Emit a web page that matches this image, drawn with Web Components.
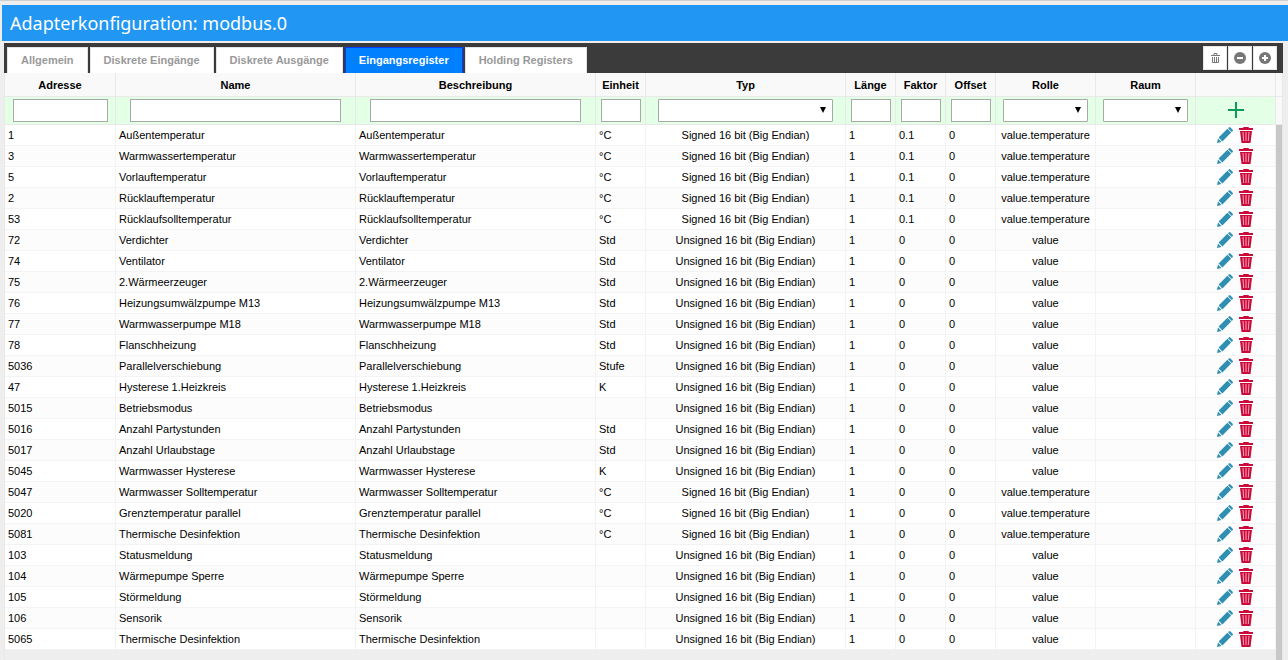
<!DOCTYPE html>
<html lang="de">
<head>
<meta charset="utf-8">
<title>Adapterkonfiguration: modbus.0</title>
<style>
html, body { margin: 0; height: 100%; }
body {
  display: flex; flex-direction: column;
  box-sizing: border-box;
  background: #eee; color: #000;
  border-top: 1px solid #d0d0d0;
  font: 11px/20px "Liberation Sans", Arial, sans-serif;
}
main { flex: 1; display: flex; flex-direction: column; min-height: 0; margin: 2px 5px 0 4px; }
</style>
</head>
<body>
<adapter-title>Adapterkonfiguration: modbus.0</adapter-title>
<main>
  <tab-bar>
    <tab-button>Allgemein</tab-button>
    <tab-button>Diskrete Eingänge</tab-button>
    <tab-button>Diskrete Ausgänge</tab-button>
    <tab-button active>Eingangsregister</tab-button>
    <tab-button>Holding Registers</tab-button>
    <tool-button slot="tools" icon="bin" label="Alle löschen"></tool-button>
    <tool-button slot="tools" icon="minus" label="Zuklappen"></tool-button>
    <tool-button slot="tools" icon="plus" label="Aufklappen"></tool-button>
  </tab-bar>
  <register-grid></register-grid>
</main>

<script>
const ICONS = {
  bin: `<svg width="12" height="12" viewBox="0 0 12 12" fill="none" stroke="#777">
    <path d="M2 3.500h9M5 3V1.500h3V3M3.500 5v5.500h6V5M5.500 5v5M7.500 5v5"/></svg>`,
  minus: `<svg width="12" height="12" viewBox="0 0 12 12"><circle cx="6" cy="6" r="6" fill="#777"/>
    <path d="M3 6h6" stroke="#fff" stroke-width="2"/></svg>`,
  plus: `<svg width="12" height="12" viewBox="0 0 12 12"><circle cx="6" cy="6" r="6" fill="#777"/>
    <path d="M3 6h6M6 3v6" stroke="#fff" stroke-width="2"/></svg>`,
  add: `<svg width="16" height="16" viewBox="0 0 16 16"><path d="M0 8h16M8 0v16" stroke="#0a9b5b" stroke-width="2"/></svg>`,
  edit: `<svg width="16" height="16" viewBox="0 0 16 16" fill="#2f8fb3">
    <path d="M0 16l1-4.500 3.500 3.500zM1.600 10.600L10.400 1.800l3.800 3.800-8.800 8.800zM11 1.200l.8-.7q.8-.8 1.600 0l2.100 2.100q.8.800 0 1.600L14.800 5z"/></svg>`,
  remove: `<svg width="14" height="16" viewBox="0 0 14 16">
    <path d="M4.500 2V.500h5V2" fill="none" stroke="#cc0a3a"/>
    <path d="M0 1h14v2H0zM1 4h12L11.500 16h-9z" fill="#cc0a3a"/>
    <path d="M4 5l.7 9M7 5v9M10 5l-.7 9" stroke="#f0a8bb"/></svg>`
};

class BaseElement extends HTMLElement {
  constructor() {
    super();
    this.attachShadow({mode: 'open'});
  }
  connectedCallback() {
    this.shadowRoot.innerHTML = this.render();
  }
}

class AdapterTitle extends BaseElement {
  render() {
    return `
<style>
:host { display: block; margin: 4px 0 0 2px; background: #2196f3; }
h1 { margin: 0; padding: 0 8px; color: #fff; font: 400 18px/36px "Noto Sans", "Open Sans", sans-serif; }
</style>
<h1><slot></slot></h1>`;
  }
}
customElements.define('adapter-title', AdapterTitle);

class TabBar extends BaseElement {
  render() {
    return `
<style>
:host { display: flex; justify-content: space-between; height: 30px; background: #3b3b3b; }
nav { display: flex; align-items: flex-end; gap: 2px; padding-left: 3px; }
.tools { display: flex; gap: 1px; padding: 3px 6px 0 0; }
</style>
<nav><slot></slot></nav>
<div class="tools"><slot name="tools"></slot></div>`;
  }
}
customElements.define('tab-bar', TabBar);

class TabButton extends BaseElement {
  render() {
    return `
<style>
:host { display: block; }
button {
  display: block; height: 26px; padding: 0 13px 1px;
  border: 1px solid #e5e5e5; border-bottom: 0;
  background: #fff; color: #999; font: bold 11px/24px "Liberation Sans", Arial, sans-serif;
}
:host([active]) button { background: #007fff; border-color: #003eff; color: #fff; }
</style>
<button type="button"><slot></slot></button>`;
  }
}
customElements.define('tab-button', TabButton);

class ToolButton extends BaseElement {
  render() {
    return `
<style>
:host { display: block; }
button {
  display: flex; align-items: center; justify-content: center;
  width: 24px; height: 24px; padding: 0;
  border: 1px solid #e5e5e5; background: #fff;
}
</style>
<button type="button" aria-label="${this.getAttribute('label')}">${ICONS[this.getAttribute('icon')]}</button>`;
  }
}
customElements.define('tool-button', ToolButton);

class IconButton extends BaseElement {
  render() {
    return `
<style>
:host { display: block; }
button { display: block; padding: 0; border: 0; background: none; }
svg { display: block; }
</style>
<button type="button" aria-label="${this.getAttribute('label')}">${ICONS[this.getAttribute('icon')]}</button>`;
  }
}
customElements.define('icon-button', IconButton);

// text box or drop-down of the insert row
class GridField extends BaseElement {
  render() {
    const label = this.getAttribute('label');
    const control = this.getAttribute('type') == 'select'
      ? `<select aria-label="${label}"><option></option></select>
         <svg width="6" height="6" viewBox="0 0 6 6"><path d="M0 0h6L3 6z"/></svg>`
      : `<input type="text" aria-label="${label}">`;
    return `
<style>
:host { display: block; position: relative; margin: 0 auto; }
input, select {
  display: block; box-sizing: border-box; width: 100%; height: 23px; margin: 0; padding: 1px 3px;
  border: 1px solid #a9a9a9; border-radius: 0; background: #fff; font: inherit;
  appearance: none;
}
select { border-radius: 1px; }
svg { position: absolute; right: 7px; top: 8px; pointer-events: none; }
</style>
${control}`;
  }
}
customElements.define('grid-field', GridField);

const COLUMNS = [
  {title: 'Adresse', width: '111px', field: '95px'},
  {title: 'Name', width: 'auto', field: 'calc(100% - 28px)'},
  {title: 'Beschreibung', width: 'auto', field: 'calc(100% - 28px)'},
  {title: 'Einheit', width: '50px', field: '40px'},
  {title: 'Typ', width: '200px', field: '175px', type: 'select', center: true},
  {title: 'Länge', width: '50px', field: '40px'},
  {title: 'Faktor', width: '50px', field: '40px'},
  {title: 'Offset', width: '50px', field: '40px'},
  {title: 'Rolle', width: '100px', field: '85px', type: 'select', center: true},
  {title: 'Raum', width: '100px', field: '85px', type: 'select', center: true}
];

const S = 'Signed 16 bit (Big Endian)';
const U = 'Unsigned 16 bit (Big Endian)';
const T = 'value.temperature';
const V = 'value';

// address, name, unit, type, factor, role
const REGISTERS = [
  [1, 'Außentemperatur', '°C', S, '0.1', T],
  [3, 'Warmwassertemperatur', '°C', S, '0.1', T],
  [5, 'Vorlauftemperatur', '°C', S, '0.1', T],
  [2, 'Rücklauftemperatur', '°C', S, '0.1', T],
  [53, 'Rücklaufsolltemperatur', '°C', S, '0.1', T],
  [72, 'Verdichter', 'Std', U, '0', V],
  [74, 'Ventilator', 'Std', U, '0', V],
  [75, '2.Wärmeerzeuger', 'Std', U, '0', V],
  [76, 'Heizungsumwälzpumpe M13', 'Std', U, '0', V],
  [77, 'Warmwasserpumpe M18', 'Std', U, '0', V],
  [78, 'Flanschheizung', 'Std', U, '0', V],
  [5036, 'Parallelverschiebung', 'Stufe', U, '0', V],
  [47, 'Hysterese 1.Heizkreis', 'K', U, '0', V],
  [5015, 'Betriebsmodus', '', U, '0', V],
  [5016, 'Anzahl Partystunden', 'Std', U, '0', V],
  [5017, 'Anzahl Urlaubstage', 'Std', U, '0', V],
  [5045, 'Warmwasser Hysterese', 'K', U, '0', V],
  [5047, 'Warmwasser Solltemperatur', '°C', S, '0', T],
  [5020, 'Grenztemperatur parallel', '°C', S, '0', T],
  [5081, 'Thermische Desinfektion', '°C', S, '0', T],
  [103, 'Statusmeldung', '', U, '0', V],
  [104, 'Wärmepumpe Sperre', '', U, '0', V],
  [105, 'Störmeldung', '', U, '0', V],
  [106, 'Sensorik', '', U, '0', V],
  [5065, 'Thermische Desinfektion', '', U, '0', V]
];

class RegisterGrid extends BaseElement {
  row([address, name, unit, type, factor, role]) {
    const cells = [address, name, name, unit, type, 1, factor, 0, role, ''];
    return `<tr>${cells.map((text, i) =>
      `<td${COLUMNS[i].center ? ' class="center"' : ''}>${text}</td>`).join('')}
      <td><div class="actions">
        <icon-button icon="edit" label="Bearbeiten"></icon-button>
        <icon-button icon="remove" label="Löschen"></icon-button>
      </div></td></tr>`;
  }
  render() {
    const cols = COLUMNS.map(c => `<col style="width: ${c.width}">`).join('') + '<col class="control">';
    return `
<style>
:host { flex: 1; display: flex; flex-direction: column; min-height: 0; border: 1px solid #e9e9e9; border-width: 0 1px; }
table { width: 100%; table-layout: fixed; border-collapse: separate; border-spacing: 0; }
.control { width: 80px; }
.gutter { width: 6px; }
th, td { box-sizing: border-box; padding: 0; border: 0 solid #e9e9e9; border-width: 0 1px 1px 0; white-space: nowrap; }
th { height: 24px; background: #f9f9f9; font-weight: bold; }
th:last-child, .insert td:last-child { border-right: 0; }
.insert td { height: 28px; background: #e3ffe5; }
.insert td:last-child { background: #f9f9f9; }
.insert icon-button { width: 16px; margin: 0 auto; padding-bottom: 1px; }
.body { flex: 1; display: flex; min-height: 0; }
.rows { flex: 1; overflow: hidden; }
.rows td { height: 21px; padding: 0 3px; border-color: #f3f3f3; background: #fff; text-align: left; overflow: hidden; }
.rows tr:nth-child(even) td { background: #fcfcfc; }
.rows td.center { text-align: center; }
.actions { display: flex; justify-content: center; gap: 6px; padding-right: 1px; }
.scroll { width: 6px; background: #c8c8c8; }
</style>
<table>
  <colgroup>${cols}<col class="gutter"></colgroup>
  <thead>
    <tr>${COLUMNS.map(c => `<th>${c.title}</th>`).join('')}<th></th><th></th></tr>
    <tr class="insert">${COLUMNS.map(c =>
      `<td><grid-field style="width: ${c.field}" type="${c.type || 'text'}" label="${c.title}"></grid-field></td>`).join('')}
      <td><icon-button icon="add" label="Hinzufügen"></icon-button></td><td></td></tr>
  </thead>
</table>
<div class="body">
  <div class="rows">
    <table>
      <colgroup>${cols}</colgroup>
      <tbody>${REGISTERS.map(r => this.row(r)).join('')}</tbody>
    </table>
  </div>
  <div class="scroll"></div>
</div>`;
  }
}
customElements.define('register-grid', RegisterGrid);
</script>
</body>
</html>
